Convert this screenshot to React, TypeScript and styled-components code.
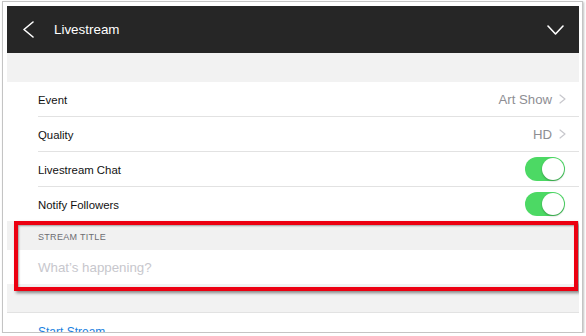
import React from "react";
import styled, { createGlobalStyle } from "styled-components";

const Global = createGlobalStyle`
  html, body { margin: 0; padding: 0; background: #ffffff; }
  body { font-family: "Liberation Sans", Arial, sans-serif; -webkit-font-smoothing: antialiased; }
  * { box-sizing: border-box; }
`;

const Frame = styled.div`
  margin: 1px 0 0 2px;
  width: 581px;
  height: 332px;
  border: 1px solid #c4c4c4;
  box-shadow: 1px 1px 2px rgba(0, 0, 0, 0.25);
  padding: 4px 3px 0 4px;
  display: flex;
  flex-direction: column;
  background: #fff;
`;

const Screen = styled.div`
  position: relative;
  flex: 1;
  overflow: hidden;
  display: flex;
  flex-direction: column;
  background: #fff;
`;

const Header = styled.div`
  height: 47px;
  flex: none;
  background: #262626;
  display: flex;
  align-items: center;
  padding: 0 15px 0 16px;
  color: #fff;
`;

const Title = styled.div`
  margin-left: 20px;
  font-size: 13.4px;
  color: #ffffff;
  flex: 1;
`;

const Spacer = styled.div<{ h: number }>`
  height: ${(p) => p.h}px;
  flex: none;
  background: #f2f2f2;
`;

const Row = styled.div<{ last?: boolean }>`
  height: ${(p) => (p.last ? 34 : 35)}px;
  flex: none;
  margin-left: 31px;
  padding-right: 13px;
  display: flex;
  align-items: center;
  border-bottom: ${(p) => (p.last ? "none" : "1px solid #e2e2e2")};
`;

const Label = styled.div`
  flex: 1;
  font-size: 11.4px;
  color: #111111;
  padding-top: 1px;
`;

const Value = styled.div`
  font-size: 13.2px;
  color: #8e8e93;
  margin-right: 7px;
`;

const Switch = styled.div`
  width: 40px;
  height: 24px;
  border-radius: 12px;
  background: #4cd964;
  position: relative;
  margin-right: 1px;
`;

const Knob = styled.div`
  position: absolute;
  right: 1px;
  top: 1px;
  width: 22px;
  height: 22px;
  border-radius: 50%;
  background: #fff;
  box-shadow: 0 1px 2px rgba(0, 0, 0, 0.3);
`;

const SectionHeader = styled.div`
  height: 29px;
  flex: none;
  background: #f1f1f1;
  padding: 11px 0 0 31px;
  font-size: 9px;
  letter-spacing: 0.3px;
  color: #6d6d72;
`;

const Input = styled.div`
  height: 34px;
  flex: none;
  padding-left: 31px;
  display: flex;
  align-items: center;
  font-size: 13.3px;
  color: #c7c7cd;
  background: #fff;
`;

const Divider = styled.div`
  height: 1px;
  flex: none;
  background: #e2e2e2;
`;

const Action = styled.div`
  padding: 12px 0 0 31px;
  font-size: 12px;
  color: #1a7fe0;
`;

const Highlight = styled.div`
  position: absolute;
  left: 7px;
  top: 215px;
  width: 564px;
  height: 70px;
  border: 4px solid #ec0011;
  box-shadow: 2px 2px 3px rgba(0, 0, 0, 0.45), inset 1px 1px 2px rgba(0, 0, 0, 0.35);
  pointer-events: none;
`;

const Chevron = ({ dir, size, color, w }: { dir: "left" | "right" | "down"; size: [number, number]; color: string; w: number }) => {
  const [wd, ht] = size;
  let d = "";
  if (dir === "left") d = `M${wd - 1} 1 L1 ${ht / 2} L${wd - 1} ${ht - 1}`;
  if (dir === "right") d = `M1 1 L${wd - 1} ${ht / 2} L1 ${ht - 1}`;
  if (dir === "down") d = `M1 1 L${wd / 2} ${ht - 1} L${wd - 1} 1`;
  return (
    <svg width={wd} height={ht} viewBox={`0 0 ${wd} ${ht}`} style={{ display: "block", flex: "none" }}>
      <path d={d} fill="none" stroke={color} strokeWidth={w} strokeLinecap="round" strokeLinejoin="round" />
    </svg>
  );
};

export default function App() {
  return (
    <>
      <Global />
      <Frame>
        <Screen>
          <Header>
            <Chevron dir="left" size={[11, 17]} color="#fff" w={1.6} />
            <Title>Livestream</Title>
            <Chevron dir="down" size={[17, 10]} color="#fff" w={1.6} />
          </Header>
          <Spacer h={29} />
          <Row>
            <Label>Event</Label>
            <Value>Art Show</Value>
            <Chevron dir="right" size={[7, 10]} color="#c7c7cc" w={1.2} />
          </Row>
          <Row>
            <Label>Quality</Label>
            <Value>HD</Value>
            <Chevron dir="right" size={[7, 10]} color="#c7c7cc" w={1.2} />
          </Row>
          <Row>
            <Label>Livestream Chat</Label>
            <Switch><Knob /></Switch>
          </Row>
          <Row last>
            <Label>Notify Followers</Label>
            <Switch><Knob /></Switch>
          </Row>
          <SectionHeader>STREAM TITLE</SectionHeader>
          <Input>What’s happening?</Input>
          <Spacer h={28} />
          <Divider />
          <Action>Start Stream</Action>
          <Highlight />
        </Screen>
      </Frame>
    </>
  );
}
